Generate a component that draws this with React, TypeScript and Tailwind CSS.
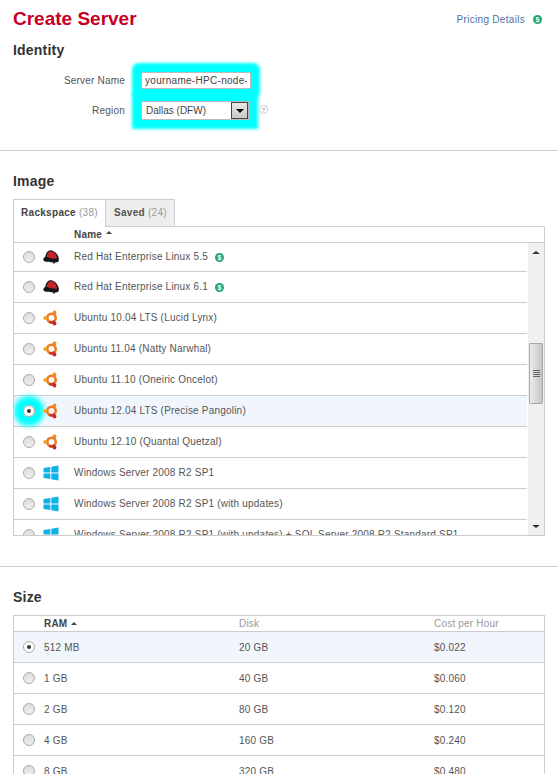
const images = [
  { name: 'Red Hat Enterprise Linux 5.5', logo: 'redhat', paid: true },
  { name: 'Red Hat Enterprise Linux 6.1', logo: 'redhat', paid: true },
  { name: 'Ubuntu 10.04 LTS (Lucid Lynx)', logo: 'ubuntu' },
  { name: 'Ubuntu 11.04 (Natty Narwhal)', logo: 'ubuntu' },
  { name: 'Ubuntu 11.10 (Oneiric Oncelot)', logo: 'ubuntu' },
  { name: 'Ubuntu 12.04 LTS (Precise Pangolin)', logo: 'ubuntu', selected: true },
  { name: 'Ubuntu 12.10 (Quantal Quetzal)', logo: 'ubuntu' },
  { name: 'Windows Server 2008 R2 SP1', logo: 'windows' },
  { name: 'Windows Server 2008 R2 SP1 (with updates)', logo: 'windows' },
  { name: 'Windows Server 2008 R2 SP1 (with updates) + SQL Server 2008 R2 Standard SP1', logo: 'windows' },
]

const sizes = [
  { ram: '512 MB', disk: '20 GB', cost: '$0.022', selected: true },
  { ram: '1 GB', disk: '40 GB', cost: '$0.060' },
  { ram: '2 GB', disk: '80 GB', cost: '$0.120' },
  { ram: '4 GB', disk: '160 GB', cost: '$0.240' },
  { ram: '8 GB', disk: '320 GB', cost: '$0.480' },
]

function Logo({ kind }: { kind: string }) {
  if (kind === 'redhat') {
    return (
      <svg viewBox="0 0 16 16" className="h-4 w-4 shrink-0">
        <path d="M.3 11C.3 9 1.500 8.300 2.300 7.800 3 3.300 5.300.8 8 1.200c3.800.5 7.200 4 7.800 8.300.3 2-.4 3.400-1.600 3.700l-2.200.300-1 1.600-1.400-1.900C6.500 13 1 13.300.3 11z" fill="#161616" />
        <path d="M3.500 7.800C4.200 4 5.900 2 8 2.200c2.800.3 5 2.600 5.700 5.500.3 1.500-.5 2.200-1.700 2-3-.2-6-1-8.500-1.900z" fill="#c9222d" />
      </svg>
    )
  }
  if (kind === 'ubuntu') {
    return (
      <svg viewBox="0 0 16 16" className="h-4 w-4 shrink-0">
        <circle cx="8.500" cy="8" r="4.200" fill="none" stroke="#ee7b24" strokeWidth="2.600" />
        <path d="M11.500 11A4.200 4.200 0 0 1 6.300 11.600" fill="none" stroke="#c8352a" strokeWidth="2.600" />
        <circle cx="2.200" cy="8" r="1.900" fill="#f6a21e" />
        <circle cx="11.500" cy="2.500" r="1.900" fill="#f28c1c" />
        <circle cx="11.500" cy="13.500" r="1.900" fill="#c9281e" />
      </svg>
    )
  }
  return (
    <svg viewBox="0 0 16 16" className="h-4 w-4 shrink-0">
      <path d="M.5 3 7.300 2v5.600H.5zM8.300 1.800 15.500.6v7H8.300zM.5 8.600h6.800V14L.5 13zM8.300 8.600h7.200v6.800l-7.200-1.200z" fill="#0fb2e6" />
    </svg>
  )
}

function Radio({ checked, glow }: { checked?: boolean; glow?: boolean }) {
  return (
    <span
      className={`flex h-3 w-3 shrink-0 items-center justify-center rounded-full border border-[#aaa] bg-gradient-to-b ${
        checked ? 'from-white to-white' : 'from-[#dcdcdc] to-[#f0f0f0]'
      } ${glow ? 'shadow-[0_0_5px_9px_#00ffff]' : ''}`}
    >
      {checked ? <span className="h-1 w-1 rounded-full bg-[#333]" /> : null}
    </span>
  )
}

function Dollar({ className }: { className: string }) {
  return (
    <span className={`flex h-[9px] w-[9px] items-center justify-center rounded-full bg-[#1fa774] text-[7px] font-bold leading-none tracking-normal text-white ${className}`}>
      $
    </span>
  )
}

function SortArrow() {
  return <span className="ml-[4px] inline-block h-0 w-0 -translate-y-[2px] border-x-[3px] border-b-[3px] border-x-transparent border-b-[#444]" />
}

function Scrollbar() {
  return (
    <div className="flex w-[16px] shrink-0 flex-col items-center justify-between bg-[#f0f0f0] pb-[7px] pt-[8px]">
      <span className="h-0 w-0 border-x-[4px] border-b-[3px] border-x-transparent border-b-[#333]" />
      <div className="absolute left-[1px] top-[100px] flex h-[61px] w-[14px] flex-col items-center justify-center gap-[1px] rounded-[1px] border border-[#aaa] bg-gradient-to-r from-[#ececec] to-[#c4c4c4]">
        <span className="h-px w-[7px] bg-[#666]" />
        <span className="h-px w-[7px] bg-[#666]" />
        <span className="h-px w-[7px] bg-[#666]" />
        <span className="h-px w-[7px] bg-[#666]" />
      </div>
      <span className="h-0 w-0 border-x-[4px] border-t-[3px] border-x-transparent border-t-[#333]" />
    </div>
  )
}

export default function App() {
  return (
    <div className="h-[774px] w-[558px] overflow-hidden bg-white font-['Liberation_Sans',Arial,sans-serif] text-[10px] tracking-[0.2px] text-[#555]">
      <section className="h-[151px] border-b border-[#ccc] px-[13px] pt-[8px]">
        <div className="flex items-start justify-between">
          <h1 className="text-[19px] font-bold leading-[22px] tracking-normal text-[#c40026]">Create Server</h1>
          <a className="mr-[3px] mt-[4px] flex items-center gap-[8px] tracking-[0.3px] text-[#4f6fa5]">
            Pricing Details
            <Dollar className="" />
          </a>
        </div>
        <h2 className="mt-[10px] text-[14px] font-bold leading-[20px] text-[#333]">Identity</h2>
        <div className="mt-[12px] grid grid-cols-[112px_auto] items-center gap-x-[16px] gap-y-[12px]">
          <label className="justify-self-end">Server Name</label>
          <input
            readOnly
            value="yourname-HPC-node-01"
            className="h-[17px] w-[110px] rounded-[2px] border border-[#bbb] bg-white px-[3px] text-[10px] tracking-[0.3px] text-[#444] shadow-[0_0_3px_9px_#00ffff] outline-none"
          />
          <label className="justify-self-end">Region</label>
          <div className="flex items-center gap-[10px]">
            <div className="flex h-[19px] w-[108px] items-center justify-between border border-[#bbb] bg-white pl-[4px] tracking-normal shadow-[0_0_3px_9px_#00ffff]">
              <span className="text-[#444]">Dallas (DFW)</span>
              <span className="flex h-[17px] w-[17px] items-center justify-center border border-[#444] bg-gradient-to-b from-[#e8e8e8] to-[#c8c8c8]">
                <span className="h-0 w-0 border-x-[4px] border-t-[4px] border-x-transparent border-t-black" />
              </span>
            </div>
            <span className="mb-[2px] flex h-[9px] w-[9px] items-center justify-center rounded-full border border-[#ccc] text-[6px] leading-none text-[#888]">?</span>
          </div>
        </div>
      </section>

      <section className="h-[416px] border-b border-[#ccc] px-[13px] pt-[20px]">
        <h2 className="text-[14px] font-bold leading-[20px] text-[#333]">Image</h2>
        <div className="mt-[8px] flex h-[28px] w-[532px] items-stretch border-b border-[#ccc]">
          <div className="z-10 -mb-px flex w-[93px] items-center border-x border-t border-[#ccc] bg-white pb-[2px] pl-[7px] font-bold tracking-[0.3px] text-[#444]">
            Rackspace <span className="ml-[3px] font-normal text-[#999]">(38)</span>
          </div>
          <div className="flex w-[69px] items-center border-r border-t border-[#ccc] bg-[#eee] pb-[2px] pl-[8px] font-bold tracking-[0.3px] text-[#555]">
            Saved <span className="ml-[3px] font-normal text-[#999]">(24)</span>
          </div>
        </div>
        <div className="w-[532px] border-x border-b border-[#ccc]">
          <div className="flex h-[16px] items-center border-b border-[#ccc] pl-[60px] font-bold text-[#444]">
            Name
            <SortArrow />
          </div>
          <div className="flex h-[292px] overflow-hidden">
            <div className="min-w-0 flex-1">
              {images.map((image, i) => (
                <div
                  key={image.name}
                  className={`flex items-center whitespace-nowrap border-b border-[#ccc] ${i === 0 ? 'h-[29px]' : 'h-[31px]'} ${image.selected ? 'bg-[#f1f6fd]' : 'bg-white'}`}
                >
                  <span className="ml-[9px]"><Radio checked={image.selected} glow={image.selected} /></span>
                  <span className="ml-[8px]"><Logo kind={image.logo} /></span>
                  <span className={`ml-[15px] ${i === 0 ? 'pb-[2px]' : 'pb-[1px]'}`}>{image.name}</span>
                  {image.paid ? <Dollar className="ml-[7px]" /> : null}
                </div>
              ))}
            </div>
            <div className="relative ml-[1px] flex">
              <Scrollbar />
            </div>
          </div>
        </div>
      </section>

      <section className="px-[13px] pt-[20px]">
        <h2 className="text-[14px] font-bold leading-[20px] text-[#333]">Size</h2>
        <div className="mt-[8px] w-[532px] border-x border-t border-[#ccc]">
          <div className="grid h-[16px] grid-cols-[195px_195px_1fr] items-center border-b border-[#ccc] pl-[30px]">
            <span className="font-bold text-[#444]">RAM<SortArrow /></span>
            <span className="text-[#999]">Disk</span>
            <span className="text-[#999]">Cost per Hour</span>
          </div>
          {sizes.map((size) => (
            <div
              key={size.ram}
              className={`flex h-[31px] items-center border-b border-[#ccc] pl-[9px] ${size.selected ? 'bg-[#f1f6fd]' : 'bg-white'}`}
            >
              <Radio checked={size.selected} />
              <span className="ml-[9px] w-[195px]">{size.ram}</span>
              <span className="w-[195px]">{size.disk}</span>
              <span>{size.cost}</span>
            </div>
          ))}
        </div>
      </section>
    </div>
  )
}
